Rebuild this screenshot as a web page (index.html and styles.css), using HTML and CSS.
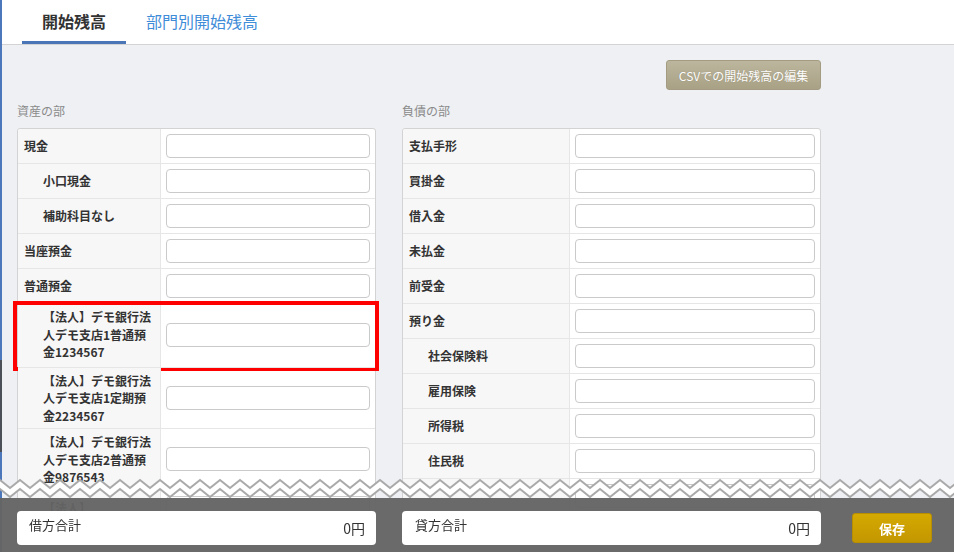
FILE: index.html
```html
<!DOCTYPE html>
<html lang="ja">
<head>
<meta charset="utf-8">
<title>開始残高</title>
<link rel="stylesheet" href="styles.css">
</head>
<body>
<div class="rail"></div>
<div class="page">
  <header class="tabs">
    <a class="tab active" href="#">開始残高</a>
    <a class="tab" href="#">部門別開始残高</a>
  </header>

  <main class="content">
    <div class="toolbar">
      <button class="btn-csv" type="button">CSVでの開始残高の編集</button>
    </div>

    <div class="columns">
      <section>
        <h2 class="section-title">資産の部</h2>
        <div class="ledger">
          <div class="row"><div class="label">現金</div><div class="field"><input type="text"></div></div>
          <div class="row"><div class="label sub">小口現金</div><div class="field"><input type="text"></div></div>
          <div class="row"><div class="label sub">補助科目なし</div><div class="field"><input type="text"></div></div>
          <div class="row"><div class="label">当座預金</div><div class="field"><input type="text"></div></div>
          <div class="row"><div class="label">普通預金</div><div class="field"><input type="text"></div></div>
          <div class="row marked"><div class="label sub">【法人】デモ銀行法人デモ支店1普通預金1234567</div><div class="field"><input type="text"></div></div>
          <div class="row"><div class="label sub">【法人】デモ銀行法人デモ支店1定期預金2234567</div><div class="field"><input type="text"></div></div>
          <div class="row"><div class="label sub">【法人】デモ銀行法人デモ支店2普通預金9876543</div><div class="field"><input type="text"></div></div>
          <div class="row"><div class="label sub">【法人】</div><div class="field"><input type="text"></div></div>
        </div>
      </section>

      <section>
        <h2 class="section-title">負債の部</h2>
        <div class="ledger">
          <div class="row"><div class="label">支払手形</div><div class="field"><input type="text"></div></div>
          <div class="row"><div class="label">買掛金</div><div class="field"><input type="text"></div></div>
          <div class="row"><div class="label">借入金</div><div class="field"><input type="text"></div></div>
          <div class="row"><div class="label">未払金</div><div class="field"><input type="text"></div></div>
          <div class="row"><div class="label">前受金</div><div class="field"><input type="text"></div></div>
          <div class="row"><div class="label">預り金</div><div class="field"><input type="text"></div></div>
          <div class="row"><div class="label sub">社会保険料</div><div class="field"><input type="text"></div></div>
          <div class="row"><div class="label sub">雇用保険</div><div class="field"><input type="text"></div></div>
          <div class="row"><div class="label sub">所得税</div><div class="field"><input type="text"></div></div>
          <div class="row"><div class="label sub">住民税</div><div class="field"><input type="text"></div></div>
          <div class="row"><div class="label"></div><div class="field"><input type="text"></div></div>
        </div>
      </section>
    </div>
  </main>
</div>

<footer class="totals">
  <svg class="torn" width="100%" height="21" xmlns="http://www.w3.org/2000/svg">
    <defs>
      <pattern id="zigzag" width="20" height="21" patternUnits="userSpaceOnUse">
        <polygon points="0,3 10,11 20,3 20,12 10,20 0,12" fill="#ffffff"/>
        <polyline points="-10,11 0,3 10,11 20,3 30,11" fill="none" stroke="#a9a9a9" stroke-width="2"/>
        <polyline points="-10,20 0,12 10,20 20,12 30,20" fill="none" stroke="#a9a9a9" stroke-width="2"/>
      </pattern>
    </defs>
    <rect x="0" y="0" width="100%" height="21" fill="url(#zigzag)"/>
  </svg>
  <div class="totals-bar">
    <div class="sum-grid">
      <div class="sum"><span class="sum-label">借方合計</span><span class="sum-value">0円</span></div>
      <div class="sum sum-credit"><span class="sum-label">貸方合計</span><span class="sum-value">0円</span></div>
    </div>
    <button class="btn-save" type="button">保存</button>
  </div>
</footer>
</body>
</html>
```

FILE: styles.css
```css
html, body {
  height: 100%;
  overflow: hidden;
}

body {
  margin: 0;
  display: flex;
  background: #eef0f4;
  color: #333;
  font-family: "Noto Sans CJK JP", "Noto Sans", sans-serif;
}

/* sliver of the side navigation */
.rail {
  flex: none;
  width: 2px;
  background: linear-gradient(to bottom, #4c77ba 0, #4c77ba 360px, #4b4f58 360px, #4b4f58 452px, #4c77ba 452px);
}

.page {
  flex: 1;
  min-width: 0;
}

/* tabs */
.tabs {
  display: flex;
  height: 44px;
  padding-left: 20px;
  background: #fff;
  border-bottom: 1px solid #d3d3d3;
}

.tab {
  position: relative;
  display: flex;
  align-items: center;
  padding: 0 20px 2px;
  font-size: 16px;
  color: #3f8cd8;
  text-decoration: none;
}

.tab.active {
  color: #333;
  font-weight: 700;
}

.tab.active::after {
  content: "";
  position: absolute;
  left: 0;
  right: 0;
  bottom: 0;
  height: 3px;
  background: #4a76b8;
}

/* main area */
.content {
  width: 804px;
  padding: 15px 0 0 15px;
}

.toolbar {
  display: flex;
  justify-content: flex-end;
}

.btn-csv {
  width: 155px;
  height: 30px;
  padding: 0;
  font-family: inherit;
  font-size: 12px;
  color: #fff;
  text-shadow: 0 0 1px rgba(80, 70, 40, 0.35);
  background: linear-gradient(#bcb69e, #a8a185);
  border: 1px solid #a39c82;
  border-radius: 3px;
}

.columns {
  display: grid;
  grid-template-columns: 359px 419px;
  column-gap: 26px;
  margin-top: 12px;
}

.section-title {
  margin: 0 0 8px;
  font-size: 12px;
  font-weight: 400;
  line-height: 18px;
  color: #8a8a8a;
}

.ledger {
  background: #fff;
  border: 1px solid #d3d3d3;
  border-radius: 3px;
}

.row {
  position: relative;
  display: grid;
  grid-template-columns: 40% 1fr;
}

.row + .row {
  border-top: 1px solid #e6e6e6;
}

.row:first-child .label {
  border-top-left-radius: 3px;
}

.label {
  display: flex;
  align-items: center;
  padding: 4px 8px 4px 6px;
  font-size: 12px;
  font-weight: 700;
  line-height: 17.5px;
  background: #f7f7f7;
  border-right: 1px solid #e6e6e6;
}

.label.sub {
  padding-left: 25px;
}

.field {
  display: flex;
  align-items: center;
  padding: 5px;
}

.field input {
  box-sizing: border-box;
  width: 100%;
  height: 24px;
  margin: 0;
  border: 1px solid #cacaca;
  border-radius: 4px;
  background: #fff;
}

/* red callout round one row */
.row.marked .label {
  padding-bottom: 6px;
}

.row.marked::after {
  content: "";
  position: absolute;
  left: -5px;
  right: -4px;
  top: -3px;
  bottom: -4px;
  border: 4px solid #ff0000;
  pointer-events: none;
}

/* totals bar pinned to the bottom */
.totals {
  position: fixed;
  left: 0;
  right: 0;
  bottom: 0;
}

.torn {
  display: block;
}

.totals-bar {
  box-sizing: border-box;
  display: flex;
  align-items: flex-start;
  height: 54px;
  padding: 13px 0 0 17px;
  background: rgba(100, 100, 100, 0.96);
}

.sum-grid {
  display: grid;
  grid-template-columns: 359px 419px;
  column-gap: 26px;
}

.sum {
  display: flex;
  justify-content: space-between;
  height: 34px;
  padding: 0 11px 0 12px;
  background: #fff;
  border-radius: 4px;
}

.sum-credit {
  padding-left: 13px;
}

.sum-label {
  padding-top: 5px;
  font-size: 13px;
  line-height: 17px;
}

.sum-value {
  padding-top: 9px;
  font-size: 14px;
  line-height: 17px;
}

.btn-save {
  width: 80px;
  height: 30px;
  margin: 2px 0 0 31px;
  padding: 0;
  font-family: inherit;
  font-size: 13px;
  font-weight: 700;
  color: #fff;
  background: linear-gradient(#d5a900, #c39700);
  border: 1px solid #b78e00;
  border-radius: 3px;
}
```
